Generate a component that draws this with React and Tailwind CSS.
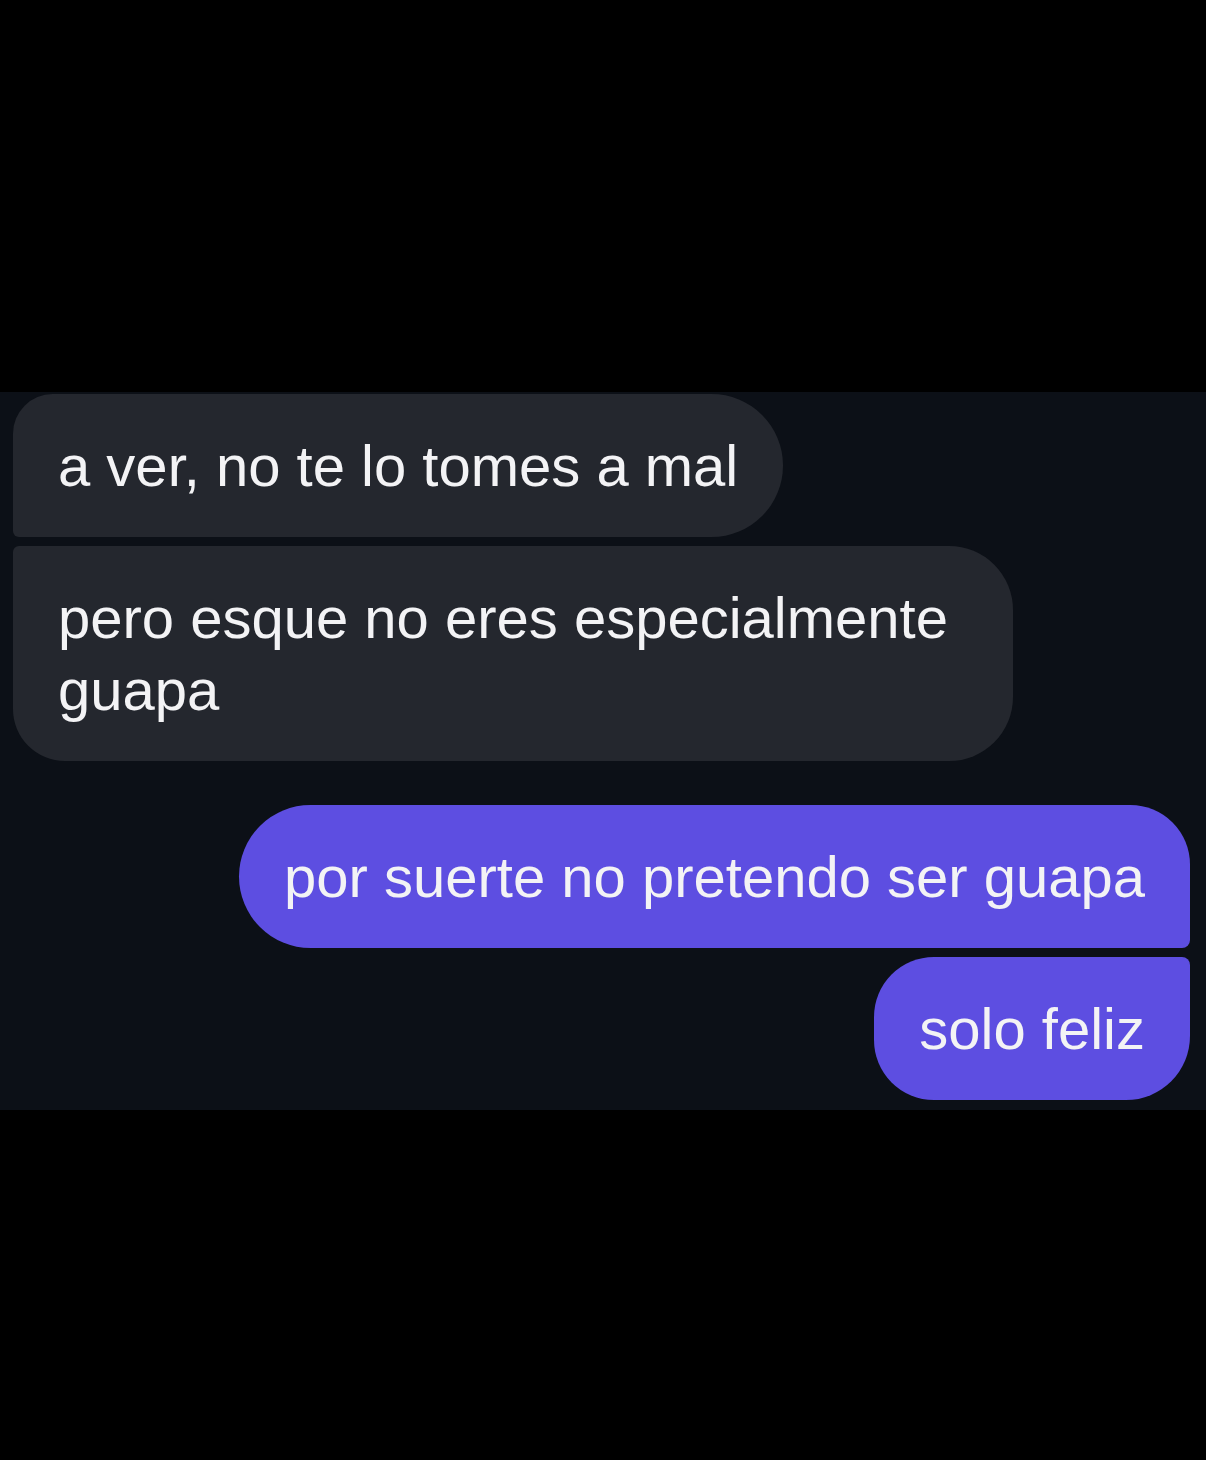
import React from 'react';

const messages = [
  {
    text: 'a ver, no te lo tomes a mal',
    mine: false,
    shape: 'rounded-tl-[40px] rounded-tr-[72px] rounded-br-[72px] rounded-bl-[6px]',
  },
  {
    text: 'pero esque no eres especialmente guapa',
    mine: false,
    shape: 'rounded-tl-[6px] rounded-tr-[64px] rounded-br-[64px] rounded-bl-[52px] mt-[9px]',
  },
  {
    text: 'por suerte no pretendo ser guapa',
    mine: true,
    shape: 'rounded-tl-[72px] rounded-bl-[72px] rounded-tr-[60px] rounded-br-[8px] mt-[44px]',
  },
  {
    text: 'solo feliz',
    mine: true,
    shape: 'rounded-tl-[60px] rounded-bl-[60px] rounded-tr-[8px] rounded-br-[64px] mt-[9px]',
  },
];

const Bubble = ({ text, mine, shape }) => (
  <div
    className={`
      max-w-[1000px] px-[45px] py-[35.5px] text-[58px] leading-[72px] text-[#f3f3f5]
      ${mine ? 'self-end bg-[#5d4ee1]' : 'self-start bg-[#24272e]'}
      ${shape}
    `}
  >
    {text}
  </div>
);

export default function App() {
  return (
    <div
      className="min-h-[1460px] w-full bg-black pt-[392px]"
      style={{ fontFamily: '"Liberation Sans", Arial, sans-serif' }}
    >
      <div className="flex flex-col bg-[#0c1017] pt-[2px] pb-[10px] pl-[13px] pr-[16px]">
        {messages.map((m) => (
          <Bubble key={m.text} {...m} />
        ))}
      </div>
    </div>
  );
}
